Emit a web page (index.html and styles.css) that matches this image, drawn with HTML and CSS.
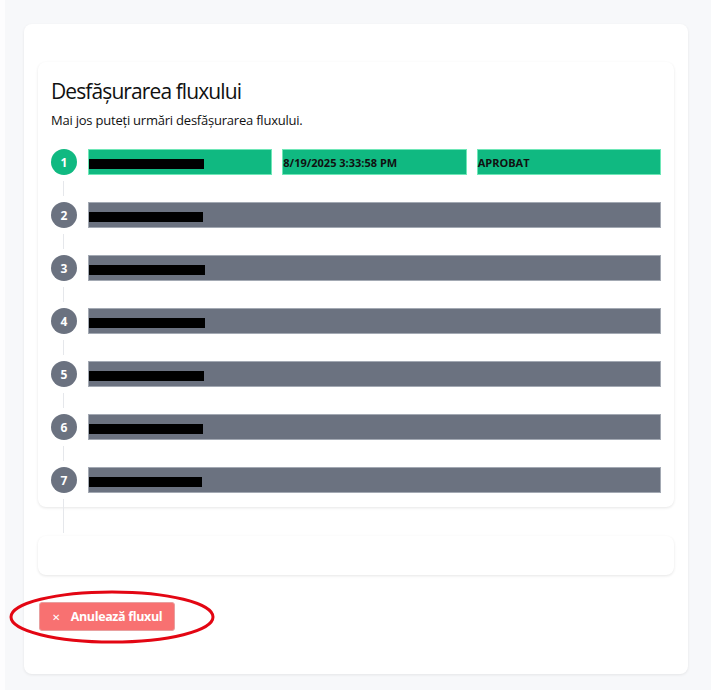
FILE: index.html
```html
<!DOCTYPE html>
<html lang="ro">
<head>
    <meta charset="UTF-8">
    <meta name="viewport" content="width=device-width, initial-scale=1.0">
    <title>Desfășurarea fluxului</title>
    <link rel="stylesheet" href="styles.css">
</head>
<body>
    <div class="main">
        <div class="card">
            <div class="flow">
                <h2>Desfășurarea fluxului</h2>
                <p class="sub">Mai jos puteți urmări desfășurarea fluxului.</p>

                <ol class="steps">
                    <li class="step done">
                        <span class="num">1</span>
                        <div class="cells">
                            <div class="cell"><span class="redact" style="width:115px"></span></div>
                            <div class="cell">8/19/2025 3:33:58 PM</div>
                            <div class="cell">APROBAT</div>
                        </div>
                    </li>
                    <li class="step">
                        <span class="num">2</span>
                        <div class="cells"><div class="cell"><span class="redact" style="width:114px"></span></div></div>
                    </li>
                    <li class="step">
                        <span class="num">3</span>
                        <div class="cells"><div class="cell"><span class="redact" style="width:116px"></span></div></div>
                    </li>
                    <li class="step">
                        <span class="num">4</span>
                        <div class="cells"><div class="cell"><span class="redact" style="width:116px"></span></div></div>
                    </li>
                    <li class="step">
                        <span class="num">5</span>
                        <div class="cells"><div class="cell"><span class="redact" style="width:115px"></span></div></div>
                    </li>
                    <li class="step">
                        <span class="num">6</span>
                        <div class="cells"><div class="cell"><span class="redact" style="width:114px"></span></div></div>
                    </li>
                    <li class="step last">
                        <span class="num">7</span>
                        <div class="cells"><div class="cell"><span class="redact" style="width:113px"></span></div></div>
                    </li>
                </ol>
            </div>

            <div class="empty-card"></div>

            <button type="button" class="cancel">
                <span class="x">&#x2715;</span> Anulează fluxul
            </button>

            <svg class="mark" width="208" height="58" viewBox="0 0 208 58">
                <ellipse cx="104" cy="28" rx="101" ry="25" fill="none" stroke="#e30613" stroke-width="3"/>
            </svg>
        </div>
    </div>
</body>
</html>
```

FILE: styles.css
```css
body {
    margin: 0;
    padding: 0;
    background-color: #f7f8fa;
    font-family: "Open Sans", Lato, sans-serif;
    color: #111;
}

.main {
    border-left: 5px solid #fdfdfe;
    padding: 24px 23px 18px 19px;
}

.card {
    position: relative;
    background: white;
    border-radius: 8px;
    box-shadow: 0 1px 3px rgba(0, 0, 0, 0.08);
    padding: 38px 14px 43px 14px;
}

.flow {
    background: white;
    border-radius: 8px;
    box-shadow: 0 1px 3px rgba(0, 0, 0, 0.1);
    padding: 15px 13px 14px 13px;
}

.flow h2 {
    margin: 0;
    font-size: 21px;
    font-stretch: 90%;
    letter-spacing: -0.9px;
    font-weight: 400;
    line-height: 28px;
}

.sub {
    margin: 6px 0 0 0;
    font-size: 13px;
    font-stretch: 92%;
    letter-spacing: -0.22px;
    line-height: 18px;
}

.steps {
    list-style: none;
    margin: 20px 0 0 0;
    padding: 0;
    display: flex;
    flex-direction: column;
    gap: 27px;
}

.step {
    position: relative;
    display: flex;
    align-items: center;
    gap: 11px;
    height: 26px;
}

.step::after {
    content: "";
    position: absolute;
    left: 12px;
    top: 32px;
    width: 1px;
    height: 15px;
    background: #e5e7eb;
}

.step.last::after {
    height: 34px;
}

.num {
    flex: none;
    width: 26px;
    height: 26px;
    border-radius: 50%;
    background: #6b7280;
    color: white;
    font-size: 12px;
    font-weight: 700;
    display: flex;
    align-items: center;
    justify-content: center;
}

.cells {
    flex: 1;
    display: flex;
    gap: 10px;
    height: 100%;
}

.cell {
    flex: 1;
    display: flex;
    align-items: center;
    background: #6b7280;
    border: 1px solid #a3a9b3;
    font-size: 11px;
    font-stretch: 93%;
    font-weight: 700;
    color: #111;
}

.done .num {
    background: #10b981;
}

.done .cell {
    background: #10b981;
    border-color: #6ee7b7;
}

.redact {
    display: block;
    height: 10px;
    background: #000;
    margin-top: 3px;
}

.empty-card {
    margin-top: 29px;
    height: 39px;
    background: white;
    border-radius: 8px;
    box-shadow: 0 1px 3px rgba(0, 0, 0, 0.1);
}

.cancel {
    margin: 27px 0 0 1px;
    height: 29px;
    width: 136px;
    background-color: #f87171;
    color: white;
    border: 1px solid #e8a0a0;
    border-radius: 3px;
    font-family: inherit;
    font-stretch: 92%;
    letter-spacing: -0.35px;
    font-size: 12.5px;
    font-weight: 700;
    display: flex;
    align-items: center;
    padding: 0 0 0 12px;
    gap: 11px;
    cursor: pointer;
}

.x {
    font-size: 10px;
    font-weight: 400;
}

.mark {
    position: absolute;
    left: -16px;
    top: 565px;
}
```
